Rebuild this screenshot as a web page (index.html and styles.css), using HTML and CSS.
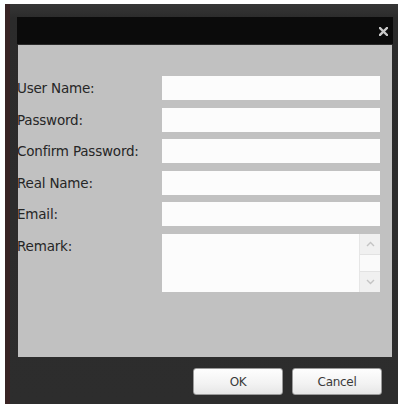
FILE: index.html
```html
<!DOCTYPE html>
<html>
<head>
<meta charset="utf-8">
<link rel="stylesheet" href="styles.css">
</head>
<body>
<div class="window">
  <div class="titlebar">
    <svg class="close" width="9" height="9" viewBox="0 0 9 9"><path d="M1 1 L8 8 M8 1 L1 8" stroke="#cacaca" stroke-width="2.4" stroke-linecap="square"/></svg>
  </div>
  <div class="content">
    <div class="form">
      <label class="label">User Name:</label>
      <div class="input"></div>
      <label class="label">Password:</label>
      <div class="input"></div>
      <label class="label">Confirm Password:</label>
      <div class="input"></div>
      <label class="label">Real Name:</label>
      <div class="input"></div>
      <label class="label">Email:</label>
      <div class="input"></div>
      <label class="label label-top">Remark:</label>
      <div class="textarea">
        <div class="scrollbar">
          <div class="arrow">
            <svg width="9" height="6" viewBox="0 0 9 6"><path d="M1 5 L4.5 1.5 L8 5" fill="none" stroke="#c4c4c4" stroke-width="1.4"/></svg>
          </div>
          <div class="track"></div>
          <div class="arrow">
            <svg width="9" height="6" viewBox="0 0 9 6"><path d="M1 1 L4.5 4.5 L8 1" fill="none" stroke="#c4c4c4" stroke-width="1.4"/></svg>
          </div>
        </div>
      </div>
    </div>
  </div>
  <div class="footer">
    <button class="btn">OK</button>
    <button class="btn">Cancel</button>
  </div>
</div>
</body>
</html>
```
FILE: styles.css
```css
html, body {
  margin: 0;
  padding: 0;
  background: #ffffff;
}
body {
  font-family: "DejaVu Sans", "Liberation Sans", sans-serif;
}
.window {
  margin: 4px 0 0 5px;
  height: 400px;
  box-sizing: border-box;
  padding: 13px 5px 0 7px;
  width: 393px;
  background: linear-gradient(#363636, #2b2b2b 14px, #2d2d2d);
  border-left: 5px solid #3a2424;
  display: flex;
  flex-direction: column;
}
.titlebar {
  height: 27px;
  background: #0b0b0b;
  display: flex;
  align-items: center;
  justify-content: flex-end;
  padding-right: 5px;
}
.close {
  display: block;
  margin-top: 2px;
}
.content {
  margin: 1px 1px 0 1px;
  height: 312px;
  background: #c1c1c1;
  overflow: hidden;
  box-sizing: border-box;
  padding-top: 31px;
}
.form {
  display: grid;
  grid-template-columns: 144px 218px;
  row-gap: 7.5px;
}
.label {
  font-size: 13.5px;
  color: #262626;
  height: 24px;
  line-height: 24px;
  white-space: nowrap;
  letter-spacing: -0.2px;
  margin-left: -1px;
}
.label-top {
  height: auto;
}
.input {
  height: 24px;
  background: #fcfcfc;
}
.textarea {
  height: 58px;
  background: #fcfcfc;
  display: flex;
  justify-content: flex-end;
}
.scrollbar {
  width: 20px;
  background: #f3f3f3;
  border-left: 1px solid #e6e6e6;
  display: flex;
  flex-direction: column;
}
.arrow {
  height: 20px;
  display: flex;
  align-items: center;
  justify-content: center;
  background: #f0f0f0;
}
.track {
  flex: 1;
  background: #fafafa;
  border-top: 1px solid #e2e2e2;
  border-bottom: 1px solid #e2e2e2;
}
.footer {
  display: flex;
  justify-content: flex-end;
  gap: 9px;
  padding-top: 11px;
  padding-right: 11px;
}
.btn {
  width: 90px;
  height: 27px;
  border: 1px solid #9a9a9a;
  border-radius: 3px;
  background: linear-gradient(#fefefe, #f2f2f2 60%, #e6e6e6);
  font-family: "DejaVu Sans", "Liberation Sans", sans-serif;
  font-size: 12px;
  color: #3a3a3a;
  padding: 0;
  letter-spacing: -0.3px;
}
```
